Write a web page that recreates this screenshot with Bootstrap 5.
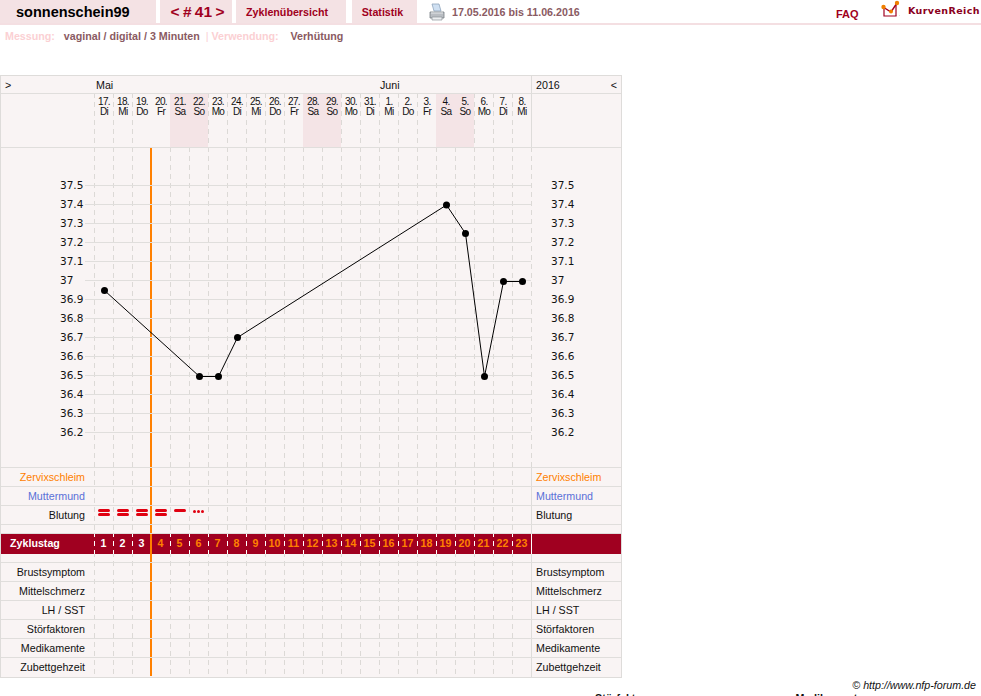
<!DOCTYPE html>
<html lang="de">
<head>
  <meta charset="UTF-8" />
  <title>Kurve</title>
  <link href="https://cdn.jsdelivr.net/npm/bootstrap@5.3.3/dist/css/bootstrap.min.css" rel="stylesheet">
  <style>
    body { font-family: "Liberation Sans", Arial, sans-serif; font-size: 10.7px; color: #111; background: #fff; line-height: 1.2; }
    /* top bar */
    .kv-top { height: 25px; border-bottom: 2px solid #f4dfe2; }
    .kv-tab { height: 23px; background: #f4e2e4; color: #a00020; font-weight: bold; line-height: 24px; text-align: center; }
    .kv-user { width: 156px; color: #000; font-size: 14.5px; padding-left: 16px; text-align: left; }
    .kv-nr { width: 72px; margin-left: 4px; font-size: 15.5px; padding-left: 3px; word-spacing: -1px; }
    .kv-ov { width: 110px; margin-left: 4px; padding-right: 8px; }
    .kv-st { width: 65px; margin-left: 6px; padding-right: 4px; }
    .kv-range { color: #8a5a62; font-weight: bold; margin-left: 7px; line-height: 24px; }
    .kv-print { margin-left: 12px; margin-top: 3px; }
    .kv-faq { position: absolute; left: 836px; top: 8px; color: #a00020; font-weight: bold; font-size: 11px; }
    .kv-logo { position: absolute; left: 880px; top: 0; }
    .kv-brand { position: absolute; left: 908px; top: 5px; font-family: "DejaVu Sans", sans-serif; font-size: 9.5px; font-weight: bold; color: #8a0020; letter-spacing: .4px; }
    .kv-meta { height: 50px; padding: 5px 0 0 5px; font-weight: bold; color: #8a5a62; }
    .kv-meta .kv-dim { color: #fbd0d3; }
    /* chart frame */
    .kv-frame { position: relative; width: 622px; background: #f9f4f4; border: 1px solid #dedcda; }
    .kv-overlay { position: absolute; left: -1px; top: -1px; z-index: 0; }
    .kv-row { position: relative; z-index: 1; height: 19px; border-bottom: 1px solid #e0dedc; line-height: 18px; }
    .kv-label { width: 93px; padding-right: 9px; text-align: right; flex: none; }
    .kv-track { width: 437px; flex: none; }
    .kv-side { width: 90px; flex: none; padding-left: 4px; border-left: 1px solid #dedcda; }
    .kv-orange { color: #ff8000; }
    .kv-blue { color: #5a70d8; }
    .kv-head { height: 18px; }
    .kv-mai { margin-left: 2px; width: 284px; }
    .kv-dates { height: 54px; }
    .kv-date { width: 19px; flex: none; text-align: center; font-size: 10px; letter-spacing: -.6px; line-height: 10px; padding: 3px 0 0 1px; }
    .kv-we { background: #f4e4e6; }
    .kv-chart { height: 320px; }
    .kv-chart svg { display: block; }
    .kv-chart text { font-family: "DejaVu Sans", sans-serif; font-size: 10.5px; fill: #111; }
    .kv-spacer { height: 9px; }
    .kv-day { width: 19px; flex: none; }
    .kv-bar { display: block; width: 11.5px; height: 3px; margin: 3px 0 0 4px; background: #e00010; border-radius: 2px; }
    .kv-bar + .kv-bar { margin-top: 1px; }
    .kv-dots { display: flex; gap: 1px; margin: 4px 0 0 4px; }
    .kv-dots i { width: 3px; height: 3px; border-radius: 50%; background: #e00010; }
    .kv-cycle { height: 20px; background: #a00020; color: #fff; font-weight: bold; line-height: 19px; border-bottom: 0; }
    .kv-cycle .kv-label { text-align: left; padding: 0 0 0 9px; }
    .kv-cycle .kv-side { border-left: 1px solid #fff; }
    .kv-num { width: 19px; flex: none; text-align: center; background: linear-gradient(#fff 5px, transparent 5px) 0 -2px / 1px 9px repeat-y; }
    .kv-now { box-shadow: -1px 0 0 #ff8000, inset 1px 0 0 #ff8000; background: none; }
    .kv-copy { width: 976px; text-align: right; font-style: italic; padding-top: 1px; }
    .kv-foot { font-weight: bold; height: 40px; }
    .kv-foot span { margin-left: 595px; }
    .kv-foot span + span { margin-left: 137px; }
  </style>
</head>
<body>

<!-- top bar -->
<div class="kv-top d-flex position-relative">
  <div class="kv-tab kv-user">sonnenschein99</div>
  <div class="kv-tab kv-nr">&lt; # 41 &gt;</div>
  <div class="kv-tab kv-ov">Zyklenübersicht</div>
  <div class="kv-tab kv-st">Statistik</div>
  <svg class="kv-print" width="16" height="18" viewBox="0 0 16 18">
    <path d="M3 1h7l2 7H5z" fill="#cfe0f2" stroke="#8fa4bb" stroke-width=".8"/>
    <path d="M1 9h14v6H1z" fill="#b9bdc2" stroke="#777d84" stroke-width=".8"/>
    <path d="M3 14h10v3H3z" fill="#eceef0" stroke="#8c9298" stroke-width=".7"/>
    <path d="M2 10h12" stroke="#e6e8ea"/>
  </svg>
  <div class="kv-range">17.05.2016 bis 11.06.2016</div>
  <div class="kv-faq">FAQ</div>
  <svg class="kv-logo" width="24" height="20" viewBox="0 0 24 20">
    <path d="M16 15.5h6" stroke="#e4e0e0" stroke-dasharray="1 2"/>
    <path d="M4 8v8h12V5" fill="none" stroke="#a00020" stroke-width="1.2"/>
    <path d="M3 7l8 5 6-9" fill="none" stroke="#a00020" stroke-width="1.4"/>
    <circle cx="3.5" cy="7" r="2.2" fill="#f08000"/>
    <circle cx="11" cy="11.5" r="2" fill="#f08000"/>
    <circle cx="17" cy="3" r="2.2" fill="#f08000"/>
  </svg>
  <div class="kv-brand">KurvenReich</div>
</div>

<div class="kv-meta">
  <span class="kv-dim">Messung:</span>&nbsp;&nbsp; vaginal / digital / 3 Minuten
  <span class="kv-dim fw-normal">&nbsp;|&nbsp;</span><span class="kv-dim">Verwendung:</span>&nbsp;&nbsp;&nbsp; Verhütung
</div>

<!-- chart -->
<div class="kv-frame" id="frame">
  <svg class="kv-overlay" id="overlay" width="622" height="604"></svg>

  <div class="kv-row kv-head d-flex">
    <div class="kv-label text-start ps-1">&gt;</div>
    <div class="kv-track d-flex">
      <span class="kv-mai">Mai</span><span>Juni</span>
    </div>
    <div class="kv-side d-flex justify-content-between"><span>2016</span><span class="pe-1">&lt;</span></div>
  </div>

  <div class="kv-row kv-dates d-flex">
    <div class="kv-label"></div>
    <div class="kv-track d-flex" id="dates"></div>
    <div class="kv-side"></div>
  </div>

  <div class="kv-row kv-chart">
    <svg id="chart" width="620" height="319"></svg>
  </div>

  <div class="kv-row d-flex"><div class="kv-label kv-orange">Zervixschleim</div><div class="kv-track"></div><div class="kv-side kv-orange">Zervixschleim</div></div>
  <div class="kv-row d-flex"><div class="kv-label kv-blue">Muttermund</div><div class="kv-track"></div><div class="kv-side kv-blue">Muttermund</div></div>
  <div class="kv-row d-flex">
    <div class="kv-label">Blutung</div>
    <div class="kv-track d-flex">
      <div class="kv-day"><b class="kv-bar"></b><b class="kv-bar"></b></div>
      <div class="kv-day"><b class="kv-bar"></b><b class="kv-bar"></b></div>
      <div class="kv-day"><b class="kv-bar"></b><b class="kv-bar"></b></div>
      <div class="kv-day"><b class="kv-bar"></b><b class="kv-bar"></b></div>
      <div class="kv-day"><b class="kv-bar"></b></div>
      <div class="kv-day"><div class="kv-dots"><i></i><i></i><i></i></div></div>
    </div>
    <div class="kv-side">Blutung</div>
  </div>
  <div class="kv-row kv-spacer d-flex"><div class="kv-label"></div><div class="kv-track"></div><div class="kv-side"></div></div>

  <div class="kv-row kv-cycle d-flex">
    <div class="kv-label">Zyklustag</div>
    <div class="kv-track d-flex" id="cycle"></div>
    <div class="kv-side"></div>
  </div>

  <div class="kv-row kv-spacer d-flex"><div class="kv-label"></div><div class="kv-track"></div><div class="kv-side"></div></div>
  <div class="kv-row d-flex"><div class="kv-label">Brustsymptom</div><div class="kv-track"></div><div class="kv-side">Brustsymptom</div></div>
  <div class="kv-row d-flex"><div class="kv-label">Mittelschmerz</div><div class="kv-track"></div><div class="kv-side">Mittelschmerz</div></div>
  <div class="kv-row d-flex"><div class="kv-label">LH / SST</div><div class="kv-track"></div><div class="kv-side">LH / SST</div></div>
  <div class="kv-row d-flex"><div class="kv-label">Störfaktoren</div><div class="kv-track"></div><div class="kv-side">Störfaktoren</div></div>
  <div class="kv-row d-flex"><div class="kv-label">Medikamente</div><div class="kv-track"></div><div class="kv-side">Medikamente</div></div>
  <div class="kv-row d-flex border-0"><div class="kv-label">Zubettgehzeit</div><div class="kv-track"></div><div class="kv-side">Zubettgehzeit</div></div>
</div>

<div class="kv-copy">© http://www.nfp-forum.de</div>
<div class="kv-foot"><span>Störfaktoren</span><span>Medikamente</span></div>

<script>
  const NS = "http://www.w3.org/2000/svg";
  const days = ["17.Di","18.Mi","19.Do","20.Fr","21.Sa","22.So","23.Mo","24.Di","25.Mi","26.Do","27.Fr","28.Sa","29.So","30.Mo","31.Di","1.Mi","2.Do","3.Fr","4.Sa","5.So","6.Mo","7.Di","8.Mi"];

  function el(parent, tag, attrs, text) {
    const e = document.createElementNS(NS, tag);
    for (const k in attrs) e.setAttribute(k, attrs[k]);
    if (text) e.textContent = text;
    parent.appendChild(e);
    return e;
  }

  // date header and cycle numbers
  const dates = document.getElementById("dates");
  const cycle = document.getElementById("cycle");
  days.forEach((d, i) => {
    const p = d.split(".");
    const weekend = p[1] === "Sa" || p[1] === "So";
    dates.innerHTML += `<div class="kv-date${weekend ? " kv-we" : ""}">${p[0]}.<br>${p[1]}</div>`;
    cycle.innerHTML += `<div class="kv-num${i === 3 ? " kv-now" : ""}${i > 2 ? " kv-orange" : ""}">${i + 1}</div>`;
  });

  // dashed day lines and the orange marker lie under the rows
  const overlay = document.getElementById("overlay");
  for (let i = 0; i < 24; i++) {
    if (i === 3) continue;
    el(overlay, "line", { x1: 94.5 + 19 * i, x2: 94.5 + 19 * i, y1: 18, y2: 601, stroke: "#dcd9d6", "stroke-dasharray": "5 4" });
  }
  el(overlay, "line", { x1: 151, x2: 151, y1: 73, y2: 601, stroke: "#ff8000", "stroke-width": 2 });

  // temperature chart, coordinates relative to the page minus the row offset
  const chart = document.getElementById("chart");
  const top0 = 148;
  const scale = ["37.5","37.4","37.3","37.2","37.1","37","36.9","36.8","36.7","36.6","36.5","36.4","36.3","36.2"];
  scale.forEach((t, i) => {
    const y = 185 + 19 * i - top0 + 0.5;
    el(chart, "line", { x1: 84, x2: 530, y1: y, y2: y, stroke: "#e0dedc" });
    el(chart, "text", { x: 59, y: y + 3 }, t);
    el(chart, "text", { x: 550, y: y + 3 }, t);
  });
  const pts = [[0,290.5],[5,376.5],[6,376.5],[7,337.5],[18,205],[19,233.5],[20,376.5],[21,281.5],[22,281.5]]
    .map(p => [103.5 + 19 * p[0], p[1] - top0]);
  el(chart, "polyline", { points: pts.map(p => p.join(",")).join(" "), fill: "none", stroke: "#000" });
  pts.forEach(p => el(chart, "circle", { cx: p[0], cy: p[1], r: 3.5, fill: "#000" }));
</script>

<script src="https://cdn.jsdelivr.net/npm/bootstrap@5.3.3/dist/js/bootstrap.bundle.min.js"></script>
</body>
</html>
